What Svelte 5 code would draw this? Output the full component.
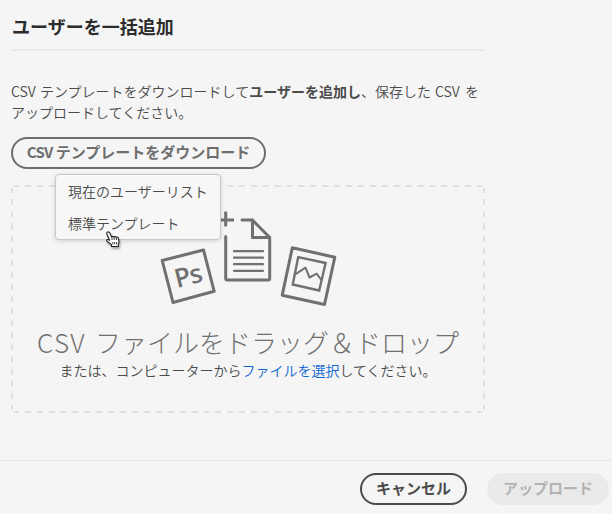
<script>
  const menuItems = ['現在のユーザーリスト', '標準テンプレート'];
</script>

<main class="dialog">
  <div class="content">
    <h1>ユーザーを一括追加</h1>
    <p class="intro">
      <span class="latin">CSV </span>テンプレートをダウンロードして<strong>ユーザーを追加し</strong>、保存した<span class="mid">CSV </span>を<br />アップロードしてください。
    </p>
    <div class="download">
      <button class="pill outline"><span class="narrow">CSV </span>テンプレートをダウンロード</button>
      <div class="menu">
        {#each menuItems as item}
          <div class="item">{item}</div>
        {/each}
      </div>
      <svg class="cursor" width="20" height="22" viewBox="0 0 20 22">
        <path d="M3.3 2.2c1-.7 2-.1 2.5.9l1.8 3.8c.7-.7 1.8-.6 2.3.1.7-.6 1.8-.5 2.3.2.9-.4 2 0 2.2.9l.5 3.2c.2 1.2-.1 2-.6 2.9v2.3H7.5v-1.9L3 11.2c-.9-1-.1-2 .9-1.7l1.7.7L2.9 4c-.3-.8-.2-1.3.4-1.8z" fill="#fff" stroke="#222" stroke-width="1.1" stroke-linejoin="round" />
        <path d="M8 7v3M10.2 7.2V10M12.4 7.5V10M8.8 12v2.3M10.7 12v2.3M12.6 12v2.3" fill="none" stroke="#222" stroke-width=".9" />
      </svg>
    </div>
    <section class="drop">
      <svg class="frame" width="474" height="228" viewBox="0 0 474 228">
        <path class="across" d="M3 1H471M3 227H471" />
        <path class="down" d="M1 3V225M473 3V225" />
      </svg>
      <svg class="art" width="184" height="100" viewBox="0 0 184 100">
        <g fill="none" stroke="#707070" stroke-width="3" stroke-linejoin="round" stroke-linecap="round">
          <path d="M67.7 4.5v15M59 13h17" stroke-linecap="butt" />
          <path d="M67.7 29.5v42q0 1.5 1.5 1.5h41q1.5 0 1.5-1.5V30.5L94.5 13H84" />
          <path d="M94.5 13v17.5h17" />
          <path d="M76 44.2h29M76 50.7h29M76 57.2h29M76 63.8h29" stroke-width="2.2" />
          <path d="M4.2 53.5 45.5 43l10.7 41.3L15 95.5z" />
          <path d="M134.3 40.7 176.8 50.2 166.5 97.5 124.2 88.2z" />
          <path d="M140.2 50.1 167.6 56 161.2 83.5 134.7 77.5z" stroke-width="2.4" stroke-linejoin="miter" />
          <path d="M137.2 67.3 147.5 60.7 151.5 70.5 158.7 66.7 163.3 73" stroke-width="2" stroke-linecap="butt" />
        </g>
        <text x="0" y="0" transform="translate(19 81) rotate(-14)">Ps</text>
      </svg>
      <h2><span class="h-latin">CSV </span>ファイルをドラッグ＆ドロップ</h2>
      <p class="choose">または、コンピューターから<a href="#file">ファイルを選択</a>してください。</p>
    </section>
  </div>
  <footer>
    <button class="pill cancel">キャンセル</button>
    <button class="pill upload" disabled>アップロード</button>
  </footer>
</main>

<style>
  :global(body) {
    background: #f5f5f5;
  }
  .dialog {
    width: 612px;
    height: 514px;
    display: flex;
    flex-direction: column;
    overflow: hidden;
    background: #f5f5f5;
    color: #4b4b4b;
    font: 350 14px/21px 'Noto Sans CJK JP', sans-serif;
  }
  .dialog * {
    box-sizing: border-box;
  }
  .content {
    flex: 1;
    width: 485px;
    padding-left: 11px;
  }
  h1 {
    margin: 0;
    height: 51px;
    padding: 12px 0 0 1px;
    border-bottom: 2px solid #e8e8e8;
    font-size: 18px;
    line-height: 28px;
    font-weight: 700;
    color: #2c2c2c;
  }
  .intro {
    margin: 30px 0 14px;
    white-space: nowrap;
  }
  .intro strong {
    font-weight: 700;
  }
  .latin, .narrow, .h-latin, .mid {
    display: inline-block;
    white-space: pre;
  }
  .latin { width: 29px; }
  .mid { width: 34px; padding-left: 4px; }
  .download {
    position: relative;
    display: flex;
  }
  .pill {
    display: block;
    height: 32px;
    padding: 0 0 2px;
    border: 2px solid #6e6e6e;
    border-radius: 16px;
    background: transparent;
    color: #6e6e6e;
    font: 700 15px/26px 'Noto Sans CJK JP', sans-serif;
    white-space: nowrap;
  }
  .outline { width: 255px; }
  .narrow { width: 29px; letter-spacing: -.7px; text-align: left; }
  .menu {
    position: absolute;
    z-index: 2;
    left: 44px;
    top: 37px;
    width: 166px;
    height: 66px;
    border: 1px solid #c8c8c8;
    border-radius: 4px;
    background: #f7f7f7;
    box-shadow: 0 1px 4px rgba(0, 0, 0, .15);
  }
  .item {
    height: 32px;
    padding-left: 12px;
    line-height: 32px;
  }
  .cursor {
    position: absolute;
    z-index: 3;
    left: 93px;
    top: 93px;
    filter: drop-shadow(1px 2px 1px rgba(0, 0, 0, .35));
  }
  .drop {
    position: relative;
    width: 474px;
    height: 228px;
    margin-top: 16px;
    padding-top: 22px;
    display: flex;
    flex-direction: column;
    align-items: center;
  }
  .frame {
    position: absolute;
    inset: 0;
  }
  .frame path {
    fill: none;
    stroke: #e0e0e0;
    stroke-width: 2;
    stroke-dashoffset: 1;
  }
  .across { stroke-dasharray: 6 5.897; }
  .down { stroke-dasharray: 6 6.11; }
  .art {
    display: block;
    flex: none;
    margin-left: 3px;
  }
  .art text {
    font: 600 26px 'Open Sans', sans-serif;
    fill: #707070;
    letter-spacing: -.8px;
  }
  h2 {
    margin: 18px 0 0;
    font-size: 26px;
    line-height: 34px;
    font-weight: 300;
    color: #707070;
    white-space: nowrap;
  }
  .h-latin { width: 58px; letter-spacing: 1.3px; }
  .choose {
    margin: 1px 0 0;
  }
  a {
    color: #0d66d0;
    text-decoration: none;
  }
  footer {
    height: 54px;
    display: flex;
    justify-content: flex-end;
    gap: 20px;
    padding: 12px 3px 0 0;
    border-top: 1px solid #e6e6e6;
  }
  .cancel {
    width: 107px;
    border-color: #4b4b4b;
    color: #4b4b4b;
  }
  .upload {
    width: 122px;
    border-color: #eaeaea;
    background: #eaeaea;
    color: #b3b3b3;
  }
</style>
